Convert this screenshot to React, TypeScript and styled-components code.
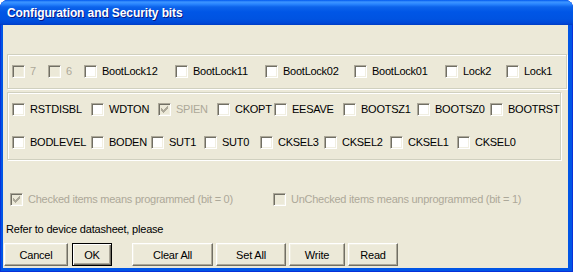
import React from 'react';
import styled, { createGlobalStyle, css } from 'styled-components';

const UI_FONT = `"Liberation Sans", Arial, sans-serif`;

const Global = createGlobalStyle`
  html, body { margin: 0; padding: 0; background: #ffffff; }
  body { font-family: ${UI_FONT}; font-size: 11px; }
`;

const Frame = styled.div`
  width: 573px;
  height: 272px;
  display: flex;
  flex-direction: column;
  background: #0055e5;
  border-radius: 8px 8px 0 0;
  overflow: hidden;
  box-shadow: inset 1px 0 #0831d9, inset -1px 0 #0831d9, inset 0 -1px #0831d9;
`;

const TitleBar = styled.div`
  height: 25px;
  flex: none;
  display: flex;
  align-items: center;
  padding-left: 7px;
  background: linear-gradient(
    to bottom,
    #0058ee 0px,
    #3d95ff 2px,
    #2a86ff 4px,
    #0c63ea 7px,
    #0056e6 12px,
    #0053e1 19px,
    #0048d8 23px,
    #003dc4 25px
  );
  color: #ffffff;
  font-family: ${UI_FONT};
  font-weight: bold;
  font-size: 12px;
  letter-spacing: -0.1px;
  text-shadow: 1px 1px #0a1883;
`;

const Client = styled.div`
  flex: 1;
  margin: 0 5px 4px 3px;
  background: #ece9d8;
  display: flex;
  flex-direction: column;
  padding-top: 29px;
`;

const Group = styled.div<{ $w: number; $h: number; $top: number }>`
  box-sizing: border-box;
  width: ${p => p.$w}px;
  height: ${p => p.$h}px;
  margin: ${p => p.$top}px 0 0 4px;
  border: 1px solid #d0d0bf;
  box-shadow: inset 1px 1px #ffffff, 1px 1px #ffffff;
  display: flex;
  flex-direction: column;
  justify-content: center;
  gap: 20px;
  padding-left: 4px;
`;

const Row = styled.div`
  display: flex;
  align-items: center;
  height: 13px;
`;

const Item = styled.label<{ $w?: number }>`
  display: flex;
  align-items: center;
  flex: none;
  width: ${p => (p.$w ? `${p.$w}px` : 'auto')};
  height: 13px;
  line-height: 13px;
`;

const Box = styled.span<{ $disabled?: boolean }>`
  box-sizing: border-box;
  width: 13px;
  height: 13px;
  flex: none;
  margin-right: 5px;
  border: 1px solid;
  border-color: #aca899 #ffffff #ffffff #aca899;
  box-shadow: inset 1px 1px #716f64, inset -1px -1px #f1efe2;
  background: ${p => (p.$disabled ? '#ece9d8' : '#ffffff')};
  display: flex;
  align-items: center;
  justify-content: center;
`;

const Label = styled.span<{ $disabled?: boolean }>`
  white-space: nowrap;
  letter-spacing: -0.25px;
  color: ${p => (p.$disabled ? '#aca899' : '#000000')};
`;

const LegendRow = styled(Row)`
  margin: 33px 0 0 7px;
`;

const Note = styled.div`
  margin: 16px 0 0 3px;
  height: 14px;
  line-height: 14px;
  letter-spacing: -0.2px;
  color: #000000;
`;

const ButtonBar = styled.div`
  display: flex;
  gap: 3px;
  margin: 7px 0 0 1px;
`;

const Button = styled.button<{ $w: number; $gapBefore?: number; $default?: boolean }>`
  box-sizing: border-box;
  width: ${p => p.$w}px;
  height: 23px;
  padding: 0;
  margin-left: ${p => p.$gapBefore ?? 0}px;
  background: #ece9d8;
  font-family: ${UI_FONT};
  font-size: 11px;
  letter-spacing: -0.2px;
  color: #000000;
  border: 1px solid;
  border-color: #ffffff #716f64 #716f64 #ffffff;
  box-shadow: inset -1px -1px #aca899, inset 1px 1px #f1efe2;
  ${p =>
    p.$default &&
    css`
      border-color: #000000;
      box-shadow: inset 1px 1px #ffffff, inset -1px -1px #716f64, inset -2px -2px #aca899;
    `}
`;

const Check = ({ color }: { color: string }) => (
  <svg width="7" height="7" viewBox="0 0 7 7" shapeRendering="crispEdges">
    <path d="M0 2 L0 5 L2 7 L7 2 L7 -1 L2 4 Z" fill={color} />
  </svg>
);

type Bit = { label: string; w?: number; disabled?: boolean; checked?: boolean };

const CheckItem = ({ label, w, disabled, checked }: Bit) => (
  <Item $w={w}>
    <Box $disabled={disabled}>{checked && <Check color={disabled ? '#aca899' : '#000'} />}</Box>
    <Label $disabled={disabled}>{label}</Label>
  </Item>
);

const lockBits: Bit[] = [
  { label: '7', w: 36, disabled: true },
  { label: '6', w: 36, disabled: true },
  { label: 'BootLock12', w: 91 },
  { label: 'BootLock11', w: 90 },
  { label: 'BootLock02', w: 89 },
  { label: 'BootLock01', w: 91 },
  { label: 'Lock2', w: 61 },
  { label: 'Lock1' },
];

const fuseHigh: Bit[] = [
  { label: 'RSTDISBL', w: 79 },
  { label: 'WDTON', w: 67 },
  { label: 'SPIEN', w: 59, disabled: true, checked: true },
  { label: 'CKOPT', w: 57 },
  { label: 'EESAVE', w: 69 },
  { label: 'BOOTSZ1', w: 74 },
  { label: 'BOOTSZ0', w: 73 },
  { label: 'BOOTRST' },
];

const fuseLow: Bit[] = [
  { label: 'BODLEVEL', w: 79 },
  { label: 'BODEN', w: 60 },
  { label: 'SUT1', w: 53 },
  { label: 'SUT0', w: 56 },
  { label: 'CKSEL3', w: 64 },
  { label: 'CKSEL2', w: 66 },
  { label: 'CKSEL1', w: 67 },
  { label: 'CKSEL0' },
];

export default function App() {
  return (
    <>
      <Global />
      <Frame>
        <TitleBar>Configuration and Security bits</TitleBar>
        <Client>
          <Group $w={560} $h={35} $top={0}>
            <Row>
              {lockBits.map(b => (
                <CheckItem key={b.label} {...b} />
              ))}
            </Row>
          </Group>
          <Group $w={554} $h={68} $top={3}>
            <Row>
              {fuseHigh.map(b => (
                <CheckItem key={b.label} {...b} />
              ))}
            </Row>
            <Row>
              {fuseLow.map(b => (
                <CheckItem key={b.label} {...b} />
              ))}
            </Row>
          </Group>
          <LegendRow>
            <CheckItem label="Checked items means programmed (bit = 0)" w={263} disabled checked />
            <CheckItem label="UnChecked items means unprogrammed (bit = 1)" disabled />
          </LegendRow>
          <Note>Refer to device datasheet, please</Note>
          <ButtonBar>
            <Button $w={64}>Cancel</Button>
            <Button $w={40} $gapBefore={1} $default>OK</Button>
            <Button $w={81} $gapBefore={17}>Clear All</Button>
            <Button $w={70}>Set All</Button>
            <Button $w={56}>Write</Button>
            <Button $w={50}>Read</Button>
          </ButtonBar>
        </Client>
      </Frame>
    </>
  );
}
